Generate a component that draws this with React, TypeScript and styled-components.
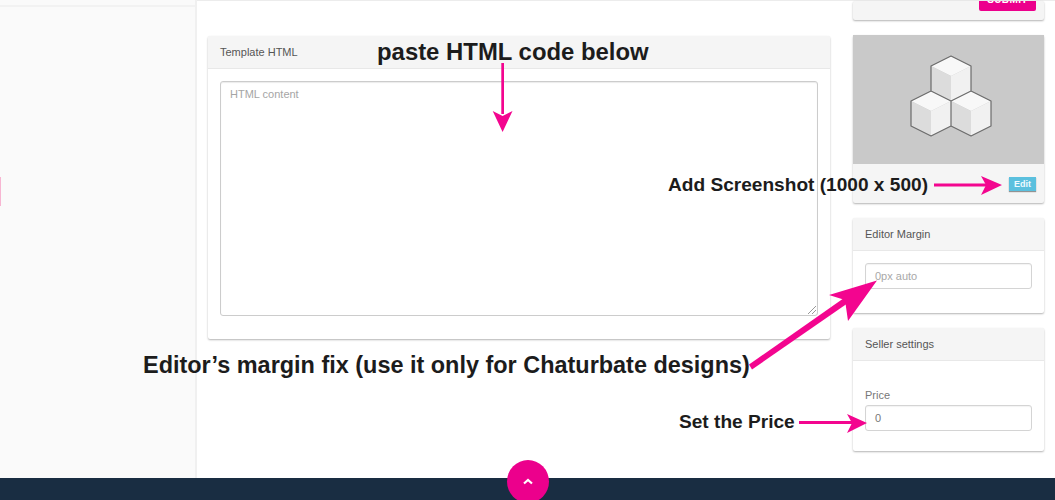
import React from "react";
import styled, { createGlobalStyle } from "styled-components";

const Global = createGlobalStyle`
  html, body { margin: 0; padding: 0; background: #fff; }
  body { font-family: "Liberation Sans", Arial, sans-serif; }
  * { box-sizing: border-box; }
`;

const Page = styled.div`
  position: relative;
  width: 1055px;
  height: 500px;
  overflow: hidden;
  display: grid;
  grid-template-columns: 197px 1fr;
  grid-template-rows: 478px 22px;
`;

const Sidebar = styled.aside`
  background: #fafafa;
  border-right: 2px solid #f0f0f0;
  padding-top: 5px;
`;

const SidebarRule = styled.div`
  height: 2px;
  background: #f2f2f2;
`;

const SidebarMark = styled.div`
  width: 1px;
  height: 29px;
  margin-top: 170px;
  background: #f7b6d2;
`;

const Main = styled.main`
  display: grid;
  grid-template-columns: 622px 191px;
  column-gap: 23px;
  padding-left: 11px;
  border-top: 1px solid #ececec;
`;

const Card = styled.section`
  background: #fff;
  border-radius: 2px;
  box-shadow: 0 1px 2px rgba(0, 0, 0, 0.3);
`;

const EditorCard = styled(Card)`
  margin-top: 35px;
  height: 303px;
`;

const CardHeader = styled.header`
  height: 33px;
  padding: 0 12px;
  display: flex;
  align-items: center;
  background: #f5f5f5;
  border-bottom: 1px solid #e8e8e8;
  color: #555;
  font-size: 11px;
`;

const EditorBody = styled.div`
  padding: 12px 12px 23px;
`;

const TextArea = styled.div`
  position: relative;
  height: 235px;
  padding: 6px 9px;
  border: 1px solid #ccc;
  border-radius: 3px;
  box-shadow: inset 0 1px 1px rgba(0, 0, 0, 0.08);
  color: #a5a5a5;
  font-size: 11px;
`;

const Grip = styled.svg`
  position: absolute;
  right: 0;
  bottom: 0;
`;

const Side = styled.div`
  display: flex;
  flex-direction: column;
  gap: 15px;
`;

const SubmitCard = styled(Card)`
  height: 19px;
  background: #f5f5f5;
  overflow: hidden;
  display: flex;
  justify-content: flex-end;
  align-items: flex-end;
  padding: 0 8px 9px 0;
`;

const SubmitButton = styled.div`
  flex: none;
  width: 57px;
  height: 28px;
  padding-top: 11px;
  background: #ec008c;
  border-radius: 2px;
  color: #fff;
  font-size: 10px;
  line-height: 11px;
  font-weight: 700;
  letter-spacing: 0.4px;
  text-align: center;
`;

const ShotCard = styled(Card)`
  height: 168px;
  background: #f5f5f5;
`;

const ShotImage = styled.div`
  height: 129px;
  background: #c9c9c9;
`;

const ShotFooter = styled.div`
  height: 38px;
  display: flex;
  justify-content: flex-end;
  align-items: flex-start;
  padding: 13px 8px 0 0;
`;

const EditButton = styled.div`
  width: 27px;
  height: 14px;
  background: #5bc0de;
  color: #eefaff;
  font-size: 9px;
  font-weight: 700;
  line-height: 14px;
  text-align: center;
  box-shadow: 0 1px 1px rgba(0, 0, 0, 0.4);
`;

const MarginCard = styled(Card)`
  height: 95px;
`;

const SellerCard = styled(Card)`
  height: 123px;
`;

const FieldBody = styled.div<{ $top: number }>`
  padding: ${(p) => p.$top}px 12px 0;
`;

const FieldLabel = styled.div`
  color: #777;
  font-size: 11px;
  line-height: 13px;
  margin-bottom: 3px;
`;

const Input = styled.div<{ $placeholder?: boolean }>`
  height: 26px;
  padding: 0 9px;
  display: flex;
  align-items: center;
  border: 1px solid #d4d4d4;
  border-radius: 3px;
  box-shadow: inset 0 1px 1px rgba(0, 0, 0, 0.05);
  color: ${(p) => (p.$placeholder ? "#a8a8a8" : "#777")};
  font-size: 11px;
`;

const Footer = styled.footer`
  grid-column: 1 / -1;
  background: #192d42;
`;

const ScrollTop = styled.div`
  position: absolute;
  left: 507px;
  top: 460px;
  width: 42px;
  height: 43px;
  border-radius: 50%;
  background: #ec008c;
  display: flex;
  align-items: center;
  justify-content: center;
`;

const ArrowLayer = styled.svg`
  position: absolute;
  left: 0;
  top: 0;
  pointer-events: none;
`;

const Note = styled.div<{ $x: number; $y: number; $size: number }>`
  position: absolute;
  left: ${(p) => p.$x}px;
  top: ${(p) => p.$y}px;
  color: #1c1c1c;
  font-size: ${(p) => p.$size}px;
  line-height: 1;
  font-weight: 700;
  white-space: nowrap;
`;

const PINK = "#f3058f";

export default function App() {
  return (
    <Page>
      <Global />
      <Sidebar>
        <SidebarRule />
        <SidebarMark />
      </Sidebar>
      <Main>
        <EditorCard>
          <CardHeader>Template HTML</CardHeader>
          <EditorBody>
            <TextArea>
              HTML content
              <Grip width="11" height="11" viewBox="0 0 11 11">
                <path d="M2 10 L10 2 M6 10 L10 6" stroke="#999" strokeWidth="1" fill="none" />
              </Grip>
            </TextArea>
          </EditorBody>
        </EditorCard>
        <Side>
          <SubmitCard>
            <SubmitButton>SUBMIT</SubmitButton>
          </SubmitCard>
          <ShotCard>
            <ShotImage>
              <svg width="191" height="129" viewBox="853 35 191 129">
                <g stroke="none">
                  <path d="M951 56 L971 66 L951 76 L931 66Z" fill="#f8f8f8" />
                  <path d="M931 66 L951 76 L951 101 L931 91Z" fill="#dcdcdc" />
                  <path d="M951 76 L971 66 L971 91 L951 101Z" fill="#f1f1f1" />
                  <path d="M931 91 L951 101 L931 111 L911 101Z" fill="#f8f8f8" />
                  <path d="M911 101 L931 111 L931 136 L911 126Z" fill="#dcdcdc" />
                  <path d="M931 111 L951 101 L951 126 L931 136Z" fill="#f1f1f1" />
                  <path d="M971 91 L991 101 L971 111 L951 101Z" fill="#f8f8f8" />
                  <path d="M951 101 L971 111 L971 136 L951 126Z" fill="#dcdcdc" />
                  <path d="M971 111 L991 101 L991 126 L971 136Z" fill="#f1f1f1" />
                </g>
                <path
                  d="M951 56 L971 66 L971 91 L991 101 L991 126 L971 136 L951 126 L931 136 L911 126 L911 101 L931 91 L931 66 Z M931 91 L951 101 L971 91 M951 101 L951 126"
                  fill="none"
                  stroke="#6b6b6b"
                  strokeWidth="1.2"
                  strokeLinejoin="round"
                />
              </svg>
            </ShotImage>
            <ShotFooter>
              <EditButton>Edit</EditButton>
            </ShotFooter>
          </ShotCard>
          <MarginCard>
            <CardHeader>Editor Margin</CardHeader>
            <FieldBody $top={12}>
              <Input $placeholder>0px auto</Input>
            </FieldBody>
          </MarginCard>
          <SellerCard>
            <CardHeader>Seller settings</CardHeader>
            <FieldBody $top={28}>
              <FieldLabel>Price</FieldLabel>
              <Input>0</Input>
            </FieldBody>
          </SellerCard>
        </Side>
      </Main>
      <Footer />
      <ScrollTop>
        <svg width="14" height="10" viewBox="0 0 14 10">
          <path d="M3 6.5 L7 3 L11 6.5" fill="none" stroke="#fff" strokeWidth="2.2" />
        </svg>
      </ScrollTop>
      <ArrowLayer width="1055" height="500" viewBox="0 0 1055 500">
        <g fill={PINK}>
          <path d="M501.3 63 H504 V114 H501.3Z" />
          <path d="M502.6 132 L492.7 111 L502.6 116 L512.5 111Z" />
          <path d="M934 183.5 H986 V186.5 H934Z" />
          <path d="M1002 185 L981 176 L986 185 L981 195Z" />
          <path d="M749 364.5 L752 369.5 L848 303 L844 298Z" />
          <path d="M877 280.5 L829 295 L845 300 L848 321Z" />
          <path d="M799 421 H853 V424 H799Z" />
          <path d="M867 423 L847 414 L852 423 L847 433Z" />
        </g>
      </ArrowLayer>
      <Note $x={377} $y={40} $size={23.9}>paste HTML code below</Note>
      <Note $x={668} $y={175} $size={19.1}>Add Screenshot (1000 x 500)</Note>
      <Note $x={143} $y={354} $size={23.45}>Editor’s margin fix (use it only for Chaturbate designs)</Note>
      <Note $x={679} $y={412} $size={19.1}>Set the Price</Note>
    </Page>
  );
}
